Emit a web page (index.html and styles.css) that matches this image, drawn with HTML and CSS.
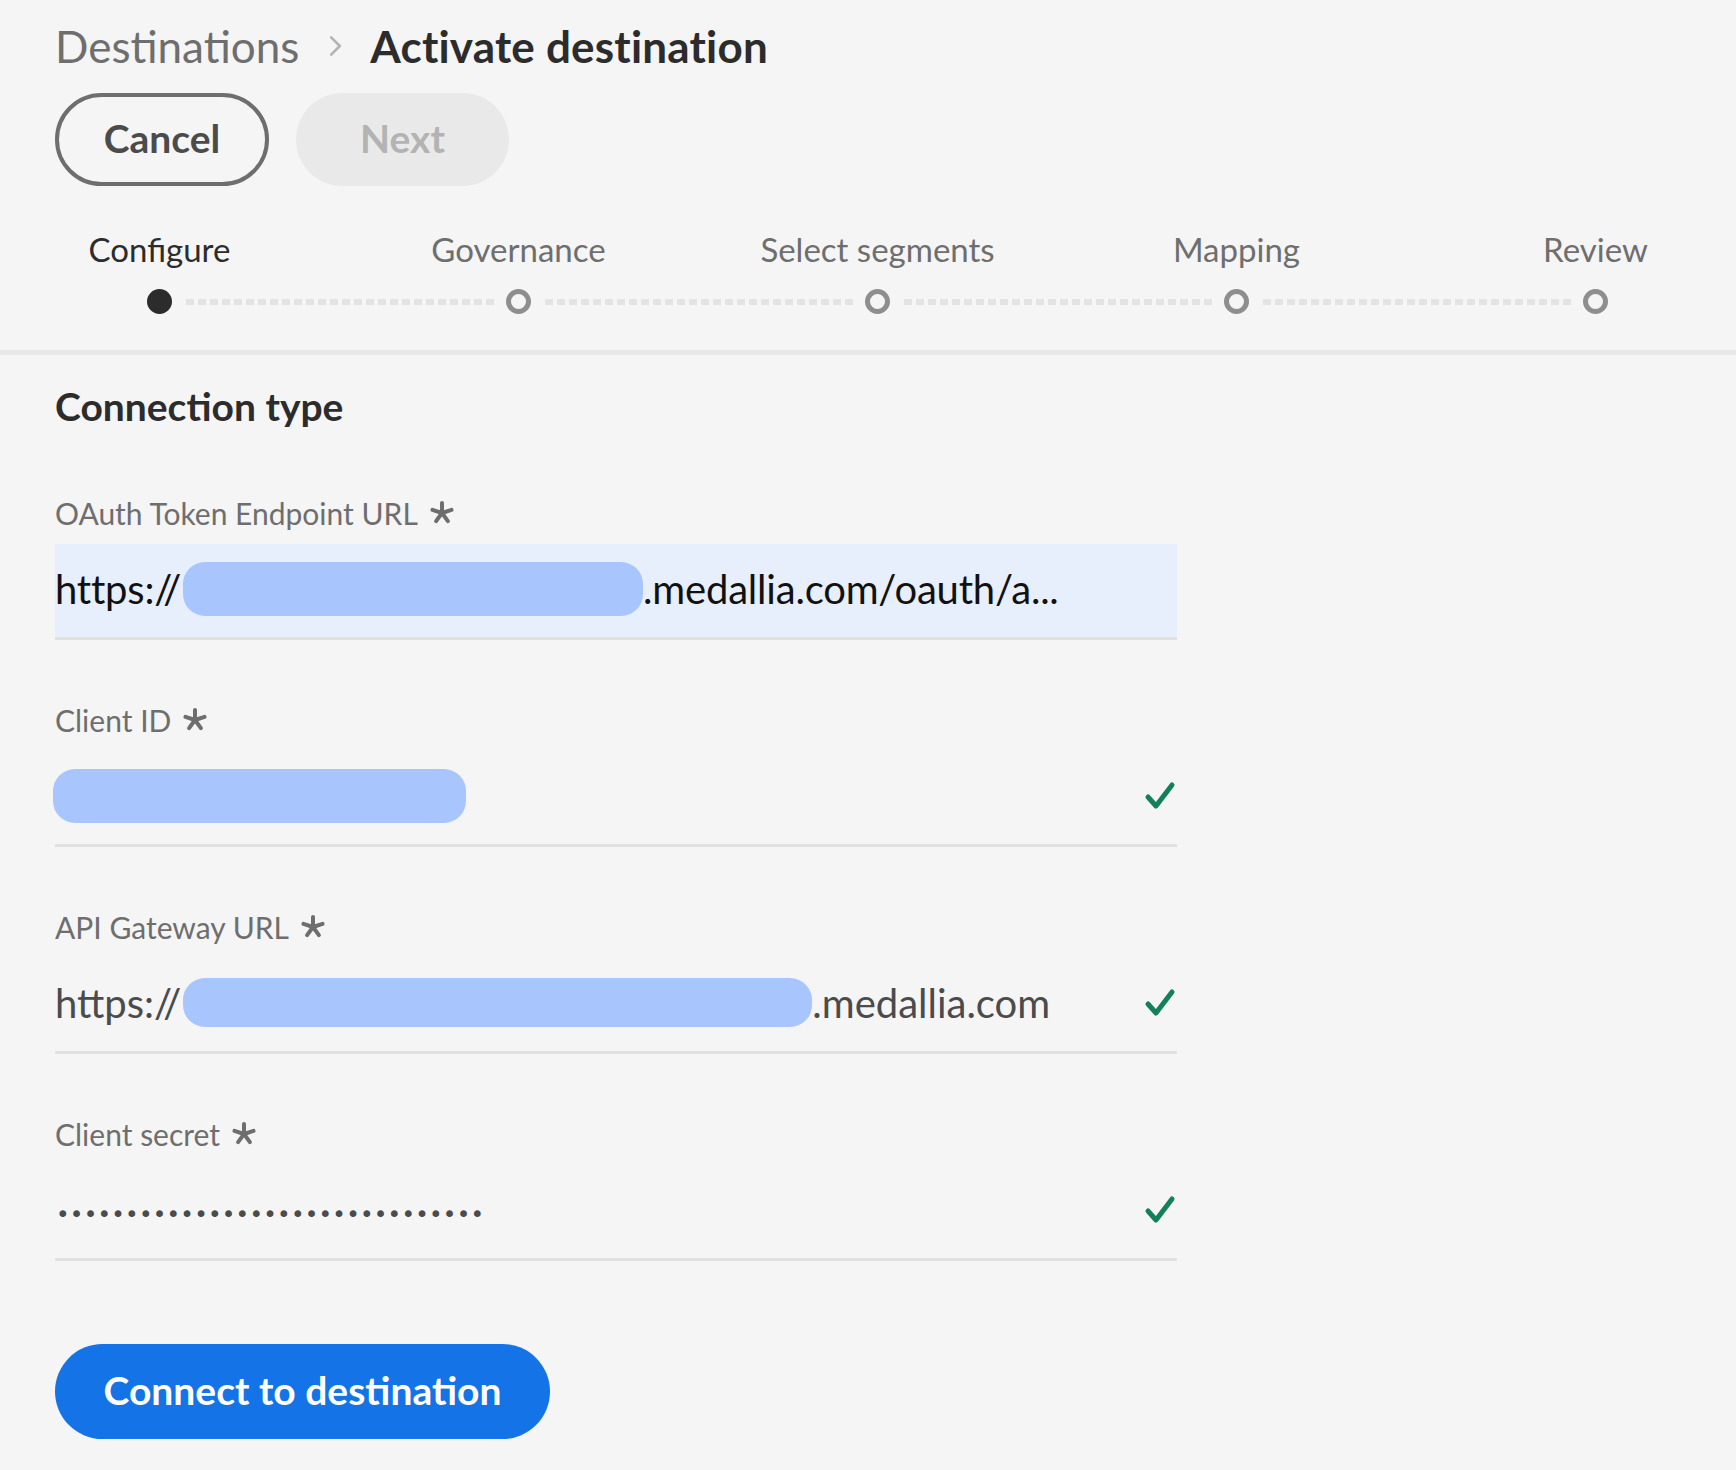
FILE: index.html
```html
<!DOCTYPE html>
<html lang="en">
<head>
<meta charset="utf-8">
<title>Activate destination</title>
<link rel="stylesheet" href="styles.css">
</head>
<body>
<header class="top">
  <nav class="crumbs">
    <span class="crumb-parent">Destinations</span>
    <svg class="crumb-chev" viewBox="0 0 12 20" width="13" height="22"><polyline points="2,2 10,10 2,18" fill="none" stroke="#b3b3b3" stroke-width="2.4" stroke-linecap="round" stroke-linejoin="round"/></svg>
    <span class="crumb-current">Activate destination</span>
  </nav>
  <div class="actions">
    <button class="btn btn-outline">Cancel</button>
    <button class="btn btn-disabled">Next</button>
  </div>
  <ol class="steps">
    <li class="step step-active"><span class="step-label">Configure</span><span class="step-dot"></span></li>
    <li class="step"><span class="step-label">Governance</span><span class="step-dot"></span></li>
    <li class="step"><span class="step-label">Select segments</span><span class="step-dot"></span></li>
    <li class="step"><span class="step-label">Mapping</span><span class="step-dot"></span></li>
    <li class="step step-last"><span class="step-label">Review</span><span class="step-dot"></span></li>
  </ol>
</header>
<main class="content">
  <h2 class="section-title">Connection type</h2>

  <div class="field-block field-block-first">
    <label class="field-label">OAuth Token Endpoint URL <svg class="req" viewBox="0 0 24 24" width="24" height="24"><g stroke="#6e6e6e" stroke-width="4" stroke-linecap="round"><line x1="12" y1="12" x2="12" y2="2"/><line x1="12" y1="12" x2="21.5" y2="8.9"/><line x1="12" y1="12" x2="17.9" y2="20.1"/><line x1="12" y1="12" x2="6.1" y2="20.1"/><line x1="12" y1="12" x2="2.5" y2="8.9"/></g></svg></label>
    <div class="field field-focus">
      <span class="val val-dark">https://</span><span class="blur blur-1"></span><span class="val val-dark">.medallia.com/oauth/a...</span>
    </div>
  </div>

  <div class="field-block">
    <label class="field-label">Client ID <svg class="req" viewBox="0 0 24 24" width="24" height="24"><g stroke="#6e6e6e" stroke-width="4" stroke-linecap="round"><line x1="12" y1="12" x2="12" y2="2"/><line x1="12" y1="12" x2="21.5" y2="8.9"/><line x1="12" y1="12" x2="17.9" y2="20.1"/><line x1="12" y1="12" x2="6.1" y2="20.1"/><line x1="12" y1="12" x2="2.5" y2="8.9"/></g></svg></label>
    <div class="field">
      <span class="blur blur-2"></span>
      <svg class="check" viewBox="0 0 32 32" width="32" height="32"><polyline points="4,17 12,26 28,5" fill="none" stroke="#12805c" stroke-width="5" stroke-linecap="round" stroke-linejoin="round"/></svg>
    </div>
  </div>

  <div class="field-block">
    <label class="field-label">API Gateway URL <svg class="req" viewBox="0 0 24 24" width="24" height="24"><g stroke="#6e6e6e" stroke-width="4" stroke-linecap="round"><line x1="12" y1="12" x2="12" y2="2"/><line x1="12" y1="12" x2="21.5" y2="8.9"/><line x1="12" y1="12" x2="17.9" y2="20.1"/><line x1="12" y1="12" x2="6.1" y2="20.1"/><line x1="12" y1="12" x2="2.5" y2="8.9"/></g></svg></label>
    <div class="field">
      <span class="val">https://</span><span class="blur blur-3"></span><span class="val">.medallia.com</span>
      <svg class="check" viewBox="0 0 32 32" width="32" height="32"><polyline points="4,17 12,26 28,5" fill="none" stroke="#12805c" stroke-width="5" stroke-linecap="round" stroke-linejoin="round"/></svg>
    </div>
  </div>

  <div class="field-block">
    <label class="field-label">Client secret <svg class="req" viewBox="0 0 24 24" width="24" height="24"><g stroke="#6e6e6e" stroke-width="4" stroke-linecap="round"><line x1="12" y1="12" x2="12" y2="2"/><line x1="12" y1="12" x2="21.5" y2="8.9"/><line x1="12" y1="12" x2="17.9" y2="20.1"/><line x1="12" y1="12" x2="6.1" y2="20.1"/><line x1="12" y1="12" x2="2.5" y2="8.9"/></g></svg></label>
    <div class="field">
      <span class="val secret">•••••••••••••••••••••••••••••••</span>
      <svg class="check" viewBox="0 0 32 32" width="32" height="32"><polyline points="4,17 12,26 28,5" fill="none" stroke="#12805c" stroke-width="5" stroke-linecap="round" stroke-linejoin="round"/></svg>
    </div>
  </div>

  <button class="btn btn-primary">Connect to destination</button>
</main>
</body>
</html>
```
FILE: styles.css
```css
* { box-sizing: border-box; }
html, body { margin: 0; padding: 0; }
body {
  background: #f5f5f5;
  font-family: "Lato", "Open Sans", sans-serif;
  color: #2c2c2c;
  width: 1736px;
  min-height: 1470px;
}
.top {
  padding: 21px 0 0 55px;
  border-bottom: 5px solid #e8e8e8;
}
.crumbs {
  display: flex;
  align-items: center;
  height: 50px;
  font-size: 44px;
}
.crumb-parent { color: #6e6e6e; }
.crumb-chev { margin: 0 28px 0 30px; }
.crumb-current { font-weight: 700; color: #2c2c2c; letter-spacing: 0.2px; }
.actions {
  display: flex;
  gap: 27px;
  margin-top: 22px;
}
.btn {
  font-family: inherit;
  font-weight: 700;
  border-radius: 50px;
  height: 93px;
  cursor: pointer;
  padding: 0 0 3px 0;
}
.btn-outline {
  width: 214px;
  font-size: 39px;
  background: transparent;
  border: 4px solid #6e6e6e;
  color: #4b4b4b;
}
.btn-disabled {
  width: 213px;
  font-size: 39px;
  background: #e9e9e9;
  border: none;
  color: #b3b3b3;
}
.steps {
  list-style: none;
  margin: 43px 0 0 -75px;
  padding: 0 0 36px 0;
  display: grid;
  grid-template-columns: repeat(5, 359px);
}
.step {
  display: flex;
  flex-direction: column;
  align-items: center;
  position: relative;
}
.step-label {
  font-size: 33px;
  line-height: 40px;
  height: 40px;
  color: #6e6e6e;
}
.step-active .step-label { color: #2c2c2c; }
.step-dot {
  margin-top: 20px;
  width: 25px;
  height: 25px;
  border-radius: 50%;
  border: 5px solid #8e8e8e;
  background: #f5f5f5;
}
.step-active .step-dot {
  background: #2c2c2c;
  border-color: #2c2c2c;
}
.step::after {
  content: "";
  position: absolute;
  top: 70px;
  left: calc(50% + 26px);
  width: 310px;
  height: 6px;
  background: repeating-linear-gradient(90deg, #e3e3e3 0 8px, transparent 8px 12px);
}
.step-last::after { display: none; }

.content {
  padding: 27px 0 0 55px;
}
.section-title {
  margin: 0;
  font-size: 39px;
  line-height: 48px;
  font-weight: 700;
  color: #2c2c2c;
}
.field-block {
  margin-top: 60px;
  width: 1122px;
}
.field-block-first { margin-top: 63px; }
.field-label {
  display: flex;
  align-items: center;
  gap: 12px;
  height: 40px;
  font-size: 30px;
  color: #6e6e6e;
}
.req { flex: none; }
.field {
  margin-top: 11px;
  height: 96px;
  padding-bottom: 4px;
  border-bottom: 3px solid #e1e1e1;
  display: flex;
  align-items: center;
}
.field-focus { background: #e8effc; }
.val {
  font-size: 40px;
  color: #4b4b4b;
  white-space: nowrap;
}
.val-dark { color: #111; letter-spacing: -0.2px; }
.blur {
  display: inline-block;
  background: #a8c6fd;
  border-radius: 22px;
  flex: none;
}
.blur-1 { width: 460px; height: 54px; margin-left: 2px; }
.blur-2 { width: 413px; height: 54px; margin-left: -2px; }
.blur-3 { width: 629px; height: 49px; margin-left: 2px; }
.secret {
  font-family: "DejaVu Sans", sans-serif;
  font-size: 23px;
  letter-spacing: 0.25px;
  margin: 8px 0 0 1px;
}
.check { margin-left: auto; margin-right: 1px; flex: none; }
.btn-primary {
  margin-top: 83px;
  width: 495px;
  height: 95px;
  background: #1473e6;
  color: #fff;
  border: none;
  font-size: 39px;
}
```
